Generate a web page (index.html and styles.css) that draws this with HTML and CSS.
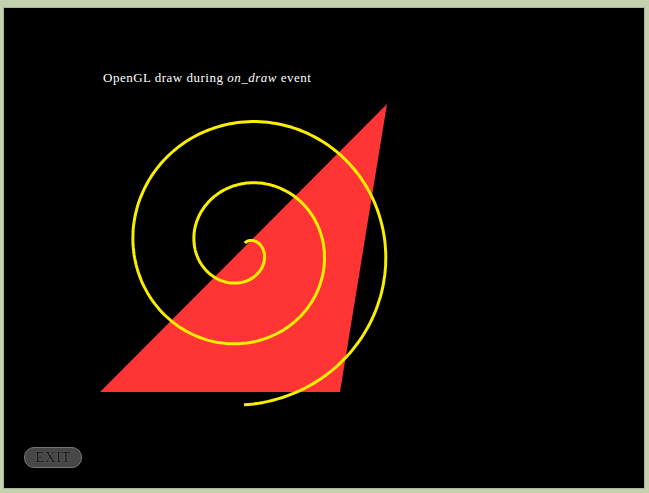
FILE: index.html
```html
<!DOCTYPE html>
<html>
<head>
<meta charset="utf-8">
<link rel="stylesheet" href="styles.css">
</head>
<body>
<div class="frame">
  <div class="canvas">
    <svg class="scene" width="640" height="480" viewBox="0 0 640 480">
      <polygon class="tri" points="96,384 383,96 336,384"/>
      <polyline id="spiral" class="spiral" points=""/>
    </svg>
    <div class="label">OpenGL draw during <i>on_draw</i> event</div>
    <button class="exit">EXIT</button>
  </div>
</div>
<script src="app.js"></script>
</body>
</html>
```
FILE: styles.css
```css
html, body {
  margin: 0;
  padding: 0;
  background: #c4d1ae;
  width: 649px;
  height: 493px;
  overflow: hidden;
}
.frame {
  margin: 7px 0 0 3px;
  width: 640px;
  height: 480px;
  border: 1px solid #a9b892;
}
.canvas {
  position: relative;
  width: 640px;
  height: 480px;
  background: #000;
}
.scene {
  display: block;
}
.tri {
  fill: #ff3535;
}
.spiral {
  fill: none;
  stroke: #f8ef00;
  stroke-width: 3;
  stroke-linejoin: round;
}
.label {
  position: absolute;
  left: 99px;
  top: 62px;
  color: #fff;
  font-family: "Liberation Serif", "DejaVu Serif", serif;
  font-size: 13px;
  line-height: 15px;
  letter-spacing: 0.5px;
}
.exit {
  position: absolute;
  left: 20px;
  top: 439px;
  width: 58px;
  height: 21px;
  padding: 0;
  border: 1px solid #767676;
  border-radius: 10px;
  background: #474747;
  color: #0e0e0e;
  font-family: "Liberation Serif", "DejaVu Serif", serif;
  font-size: 15px;
  line-height: 19px;
  letter-spacing: 0.3px;
  text-shadow: 0 0 1px #9a9a9a;
}
```
FILE: app.js
```js
(function () {
  var cx = 240, cy = 240, pts = [];
  for (var t = 0.08; t <= 2.551; t += 0.005) {
    var r = 61.5 * t;
    var a = 2 * Math.PI * (t - 0.3);
    pts.push((cx + r * Math.cos(a)).toFixed(1) + "," + (cy + r * Math.sin(a)).toFixed(1));
  }
  document.getElementById("spiral").setAttribute("points", pts.join(" "));
})();
```
